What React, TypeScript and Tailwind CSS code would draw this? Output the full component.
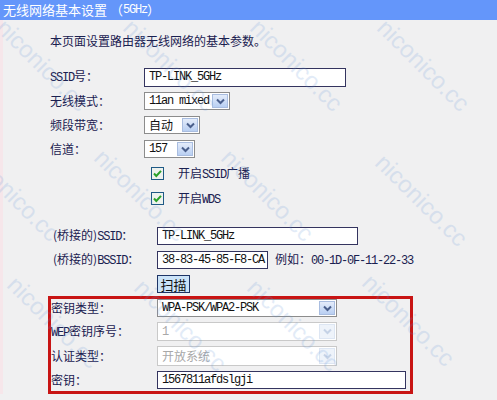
import React from "react";

const CJK = { fontFamily: '"Noto Sans CJK SC", "Noto Sans", sans-serif' };

// latin bits in the SimSun-ish monospaced look
function L({ children }: { children: React.ReactNode }) {
  return <span className="font-['Liberation_Mono',monospace] text-[12px] tracking-[-1.2px]">{children}</span>;
}

function Arrow({ disabled }: { disabled?: boolean }) {
  return (
    <div
      className={`m-[1px] ml-auto flex w-[16px] shrink-0 items-center justify-center border ${
        disabled ? "border-[#dde6f3] bg-[#eef3fa]" : "border-[#a9bde0] bg-gradient-to-b from-[#e4ecfa] to-[#b9cff2]"
      }`}
    >
      <svg width="9" height="7" viewBox="0 0 9 7">
        <path d="M1 1.5 L4.5 5 L8 1.5" fill="none" stroke={disabled ? "#c5d2e6" : "#4a5f8c"} strokeWidth="2" />
      </svg>
    </div>
  );
}

function Select({ value, w, h = "h-[18px]", disabled }: { value: React.ReactNode; w: string; h?: string; disabled?: boolean }) {
  return (
    <div
      className={`flex ${w} ${h} border bg-white ${
        disabled ? "border-[#c9c9c9] text-[#a8a8a8]" : "border-[#8c8c8c] text-[#111]"
      }`}
    >
      <span className="flex items-center pl-[4px] leading-none">{value}</span>
      <Arrow disabled={disabled} />
    </div>
  );
}

function Input({ value, w, h }: { value: string; w: string; h: string }) {
  return (
    <div className={`flex items-center ${w} ${h} border border-[#34345f] bg-white pl-[4px] text-[#111]`}>
      <L>{value}</L>
    </div>
  );
}

function Check({ label }: { label: React.ReactNode }) {
  return (
    <div className="flex h-[25px] items-center pl-[148px]">
      <svg width="13" height="13" viewBox="0 0 13 13">
        <rect x="0.5" y="0.5" width="12" height="12" fill="#eef2ee" stroke="#1f5a86" />
        <path d="M3 6.5 L5.3 9 L10 3.8" fill="none" stroke="#2aa12a" strokeWidth="2" />
      </svg>
      <span className="ml-[14px]">{label}</span>
    </div>
  );
}

const marks = [
  [9, 15], [136, 15], [263, 15], [390, 15],
  [-20, 145], [107, 145], [234, 145], [388, 150],
  [20, 272], [147, 275], [260, 275], [375, 270],
];

export default function App() {
  return (
    <div className="relative h-[400px] w-[497px] overflow-hidden bg-[#f0f0f1] text-[12px] text-[#1a2050]" style={CJK}>
      <div className="flex h-[20px] items-center bg-[#6496fa] pl-[3px] text-[13px] text-white">
        无线网络基本设置 （ <L>5GHz</L> ）
      </div>

      <div className="border-l-[3px] border-[#f6e6ea]">
        <div className="h-[45px] pl-[47px] pt-[13px] leading-[16px]">本页面设置路由器无线网络的基本参数。</div>

        <div className="flex h-[24px] items-center pl-[47px]">
          <span className="w-[94px]"><L>SSID</L>号：</span>
          <Input value="TP-LINK_5GHz" w="w-[202px]" h="h-[19px]" />
        </div>
        <div className="flex h-[24px] items-center pl-[47px]">
          <span className="w-[94px]">无线模式：</span>
          <Select value={<L>11an mixed</L>} w="w-[86px]" />
        </div>
        <div className="flex h-[24px] items-center pl-[47px]">
          <span className="w-[94px]">频段带宽：</span>
          <Select value="自动" w="w-[56px]" />
        </div>
        <div className="flex h-[24px] items-center pl-[47px]">
          <span className="w-[94px]">信道：</span>
          <Select value={<L>157</L>} w="w-[51px]" />
        </div>
        <Check label={<>开启<L>SSID</L>广播</>} />
        <Check label={<>开启<L>WDS</L></>} />

        <div className="mt-[13px] flex h-[24px] items-center pl-[50px]">
          <span className="w-[104px]">(桥接的)<L>SSID</L>：</span>
          <Input value="TP-LINK_5GHz" w="w-[201px]" h="h-[18px]" />
        </div>
        <div className="flex h-[24px] items-center pl-[50px]">
          <span className="w-[104px]">(桥接的)<L>BSSID</L>：</span>
          <Input value="38-83-45-85-F8-CA" w="w-[111px]" h="h-[18px]" />
          <span className="ml-[7px]">例如：<L>00-1D-0F-11-22-33</L></span>
        </div>
        <div className="flex h-[24px] items-start pl-[154px] pt-[3px]">
          <button type="button" className="h-[18px] w-[33px] border border-[#1e3466] bg-[#cbe3f8] text-[13px] leading-none text-[#111]">
            扫描
          </button>
        </div>

        <div className="ml-[45px] flex w-[365px] flex-col gap-[5px] border-[3px] border-[#c81414]">
          <div className="flex h-[18px] items-center">
            <span className="w-[106px]">密钥类型：</span>
            <Select value={<L>WPA-PSK/WPA2-PSK</L>} w="w-[180px]" h="h-[18px]" />
          </div>
          <div className="flex h-[19px] items-center">
            <span className="w-[106px]"><L>WEP</L>密钥序号：</span>
            <Select value={<L>1</L>} w="w-[180px]" h="h-[19px]" disabled />
          </div>
          <div className="flex h-[20px] items-center">
            <span className="w-[106px]">认证类型：</span>
            <Select value="开放系统" w="w-[180px]" h="h-[20px]" disabled />
          </div>
          <div className="flex h-[20px] items-start">
            <span className="w-[106px] leading-[18px]">密钥：</span>
            <Input value="1567811afdslgji" w="w-[249px]" h="h-[18px]" />
          </div>
        </div>
      </div>

      {marks.map(([x, y], i) => (
        <span
          key={i}
          className="pointer-events-none absolute origin-top-left rotate-45 whitespace-nowrap font-['Liberation_Sans',sans-serif] text-[24px] leading-none text-[#5b8fd6] opacity-[0.17]"
          style={{ left: x, top: y }}
        >
          niconico.cc
        </span>
      ))}
    </div>
  );
}
